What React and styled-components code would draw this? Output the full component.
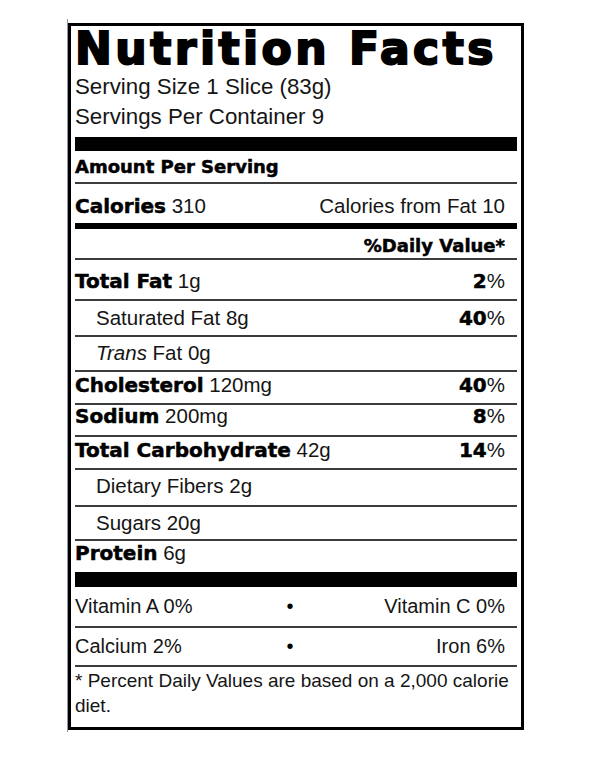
import React from 'react'
import styled, { createGlobalStyle } from 'styled-components'

const rows = [
    { h: 41, pb: 6, label: 'Total Fat', value: '1g', pct: '2' },
    { h: 36, pb: 5, indent: true, value: 'Saturated Fat 8g', pct: '40' },
    { h: 35, pb: 5, indent: true, trans: true, value: 'Fat 0g' },
    { h: 33, pb: 6, label: 'Cholesterol', value: '120mg', pct: '40' },
    { h: 32, pb: 7, label: 'Sodium', value: '200mg', pct: '8' },
    { h: 33, pb: 6, label: 'Total Carbohydrate', value: '42g', pct: '14' },
    { h: 37, pb: 7, indent: true, value: 'Dietary Fibers 2g' },
    { h: 34, pb: 4, indent: true, value: 'Sugars 20g' },
]

const App = () => {
    return (
        <Page>
            <GlobalStyle />
            <Frame>
                <Label>
                    <Title>Nutrition Facts</Title>
                    <Serving>
                        <div>Serving Size 1 Slice (83g)</div>
                        <div>Servings Per Container 9</div>
                    </Serving>
                    <Bar $h={14} />

                    <Row $h={33} $pb={4} $small>
                        <Strong>Amount Per Serving</Strong>
                    </Row>
                    <Row $h={39} $pb={5} $noLine>
                        <span><Strong>Calories</Strong> 310</span>
                        <span>Calories from Fat 10</span>
                    </Row>
                    <Bar $h={6} />
                    <Row $h={31} $pb={1} $small>
                        <span />
                        <Strong>%Daily Value*</Strong>
                    </Row>

                    {rows.map((r, i) => (
                        <Row key={i} $h={r.h} $pb={r.pb} $indent={r.indent}>
                            <span>
                                {r.label && <Strong>{r.label}</Strong>}
                                {r.label && ' '}
                                {r.trans && <em>Trans</em>}
                                {r.trans && ' '}
                                {r.value}
                            </span>
                            {r.pct && <span><Strong>{r.pct}</Strong>%</span>}
                        </Row>
                    ))}

                    <Row $h={31} $pb={7} $noLine>
                        <span><Strong>Protein</Strong> 6g</span>
                    </Row>
                    <Bar $h={15} />

                    <VitaminRow $h={41} $pb={8}>
                        <span>Vitamin A 0%</span>
                        <Dot>•</Dot>
                        <span className="right">Vitamin C 0%</span>
                    </VitaminRow>
                    <VitaminRow $h={39} $pb={7}>
                        <span>Calcium 2%</span>
                        <Dot>•</Dot>
                        <span className="right">Iron 6%</span>
                    </VitaminRow>

                    <Footnote>
                        * Percent Daily Values are based on a 2,000 calorie diet.
                    </Footnote>
                </Label>
            </Frame>
        </Page>
    )
}

export default App


const GlobalStyle = createGlobalStyle`
    body {
        margin: 0;
        background: #fff;
        font-family: "Liberation Sans", Arial, sans-serif;
        color: #151515;
    }
`

const Page = styled.div`
    padding: 19px 0 0 67px;
`

const Frame = styled.div`
    width: fit-content;
    border-left: 1px solid #9494ac;
    padding: 4px 0 2px;
`

const Label = styled.section`
    width: 456px;
    box-sizing: border-box;
    border: 3px solid #000;
    padding: 0 4px;
`

const Title = styled.h1`
    margin: 1px 0 0;
    font: 700 44px/44px "DejaVu Sans", sans-serif;
    letter-spacing: 3.5px;
    -webkit-text-stroke: 2px #000;
    color: #000;
    white-space: nowrap;
`

const Serving = styled.div`
    margin-top: 1px;
    padding-bottom: 5px;
    font-size: 22.3px;
    line-height: 30px;
`

const Bar = styled.div`
    height: ${p => p.$h}px;
    background: #000;
`

const Strong = styled.b`
    font-family: "DejaVu Sans", sans-serif;
    font-weight: 700;
    font-size: ${p => (p.$size ? `${p.$size}px` : 'inherit')};
    color: #000;
    -webkit-text-stroke: 0.5px #000;
`

const Row = styled.div`
    box-sizing: border-box;
    height: ${p => p.$h}px;
    display: flex;
    justify-content: space-between;
    align-items: flex-end;
    padding: 0 12px ${p => p.$pb}px ${p => (p.$indent ? 21 : 0)}px;
    border-bottom: ${p => (p.$noLine ? 'none' : '2px solid #3c3c3c')};
    font-size: ${p => (p.$small ? 18 : 20.5)}px;
    line-height: ${p => (p.$small ? 22 : 24)}px;
    white-space: nowrap;

    b {
        font-size: ${p => (p.$small ? 18 : 20)}px;
    }

    em {
        font-style: italic;
    }
`

const VitaminRow = styled.div`
    box-sizing: border-box;
    height: ${p => p.$h}px;
    display: grid;
    grid-template-columns: 1fr auto 1fr;
    align-items: end;
    padding: 0 12px ${p => p.$pb}px 0;
    border-bottom: 2px solid #3c3c3c;
    font-size: 20px;
    line-height: 24px;

    .right {
        text-align: right;
    }
`

const Dot = styled.span`
    color: #000;
`

const Footnote = styled.p`
    margin: 0;
    height: 60px;
    box-sizing: border-box;
    padding: 1px 8px 0 0;
    font-size: 19px;
    line-height: 25px;
`
